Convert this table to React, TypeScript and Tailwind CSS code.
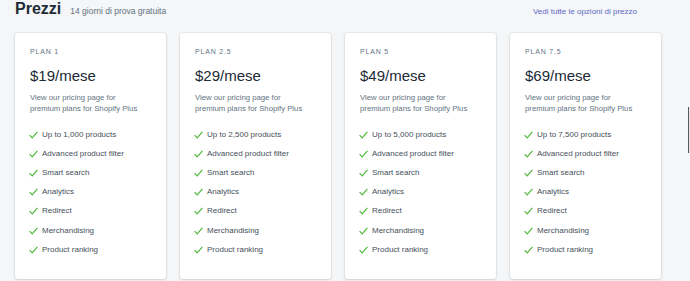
const plans = [
  { name: "PLAN 1", price: "$19/mese", products: "1,000" },
  { name: "PLAN 2.5", price: "$29/mese", products: "2,500" },
  { name: "PLAN 5", price: "$49/mese", products: "5,000" },
  { name: "PLAN 7.5", price: "$69/mese", products: "7,500" },
];

const extras = [
  "Advanced product filter",
  "Smart search",
  "Analytics",
  "Redirect",
  "Merchandising",
  "Product ranking",
];

function Check() {
  return (
    <svg width="9" height="8" viewBox="0 0 9 8" className="shrink-0 -ml-[1px]">
      <path d="M0.6 4.2 L3.2 6.8 L8.4 0.8" fill="none" stroke="#50b83c" strokeWidth="1.2" />
    </svg>
  );
}

export default function App() {
  return (
    <div
      className="relative w-[690px] h-[281px] overflow-hidden bg-[#f4f6f8] text-[#212b36]"
      style={{ fontFamily: '"Liberation Sans", Arial, sans-serif' }}
    >
      {/* header */}
      <div className="flex items-baseline h-[33px] pl-[15px] pr-[53px] pt-[1px]">
        <h1 className="text-[16px] leading-[16px] font-bold">Prezzi</h1>
        <span className="ml-[9px] text-[8.5px] text-[#637381]">14 giorni di prova gratuita</span>
        <a className="ml-auto text-[8px] text-[#5c6ac4]">Vedi tutte le opzioni di prezzo</a>
      </div>

      {/* plans */}
      <div className="flex gap-[14px] px-[15px]">
        {plans.map((p) => (
          <div
            key={p.name}
            className="w-[151px] h-[246px] bg-white rounded-[3px] px-[15px] pt-[14px] shadow-[0_0_0_1px_rgba(63,63,68,0.06),0_1px_3px_0_rgba(63,63,68,0.15)]"
          >
            <div className="text-[7px] leading-[10px] tracking-[0.8px] text-[#637381]">{p.name}</div>
            <div className="mt-[10px] text-[15px] leading-[18px]">{p.price}</div>
            <div className="mt-[7px] text-[7.75px] leading-[11px] text-[#637381]">
              View our pricing page for
              <br />
              premium plans for Shopify Plus
            </div>
            <ul className="mt-[11px]">
              {[`Up to ${p.products} products`, ...extras].map((f) => (
                <li key={f} className="flex items-center gap-[4px] h-[19.2px] text-[8px] text-[#454f5b]">
                  <Check />
                  <span>{f}</span>
                </li>
              ))}
            </ul>
          </div>
        ))}
      </div>

      {/* scrollbar thumb at the edge */}
      <div className="absolute left-[688px] top-[107px] w-[1px] h-[46px] bg-[#5a5a5a]" />
      <div className="absolute left-[689px] top-[107px] w-[1px] h-[46px] bg-[#e6e6e6]" />
    </div>
  );
}
